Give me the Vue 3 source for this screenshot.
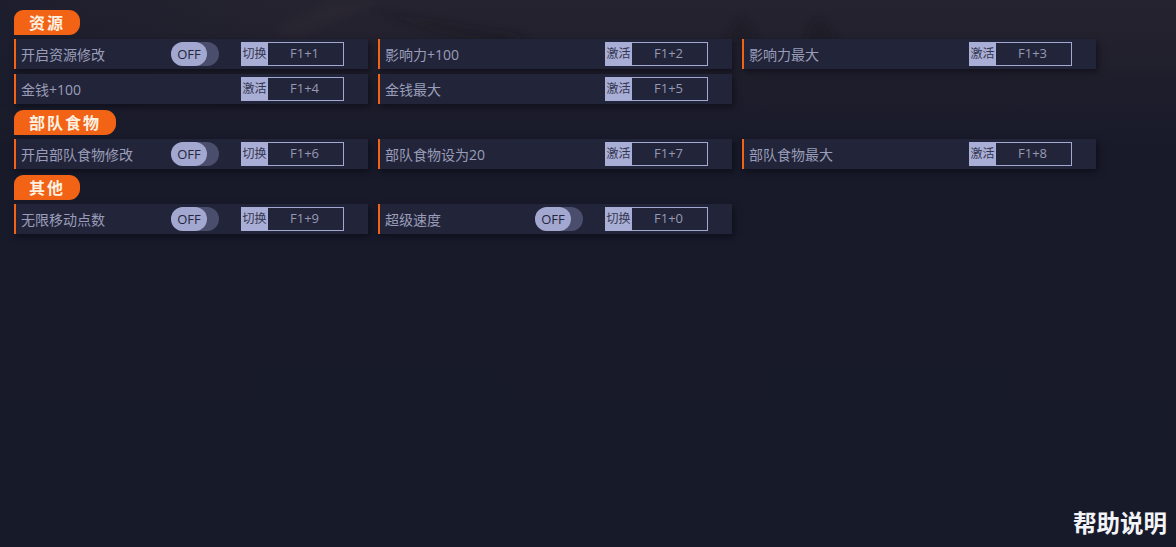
<script setup>
const sections = [
  { title: '资源', rows: [
    { name: '开启资源修改', toggle: true, act: '切换', key: 'F1+1' },
    { name: '影响力+100', act: '激活', key: 'F1+2' },
    { name: '影响力最大', act: '激活', key: 'F1+3' },
    { name: '金钱+100', act: '激活', key: 'F1+4' },
    { name: '金钱最大', act: '激活', key: 'F1+5' },
  ] },
  { title: '部队食物', rows: [
    { name: '开启部队食物修改', toggle: true, act: '切换', key: 'F1+6' },
    { name: '部队食物设为20', act: '激活', key: 'F1+7' },
    { name: '部队食物最大', act: '激活', key: 'F1+8' },
  ] },
  { title: '其他', rows: [
    { name: '无限移动点数', toggle: true, act: '切换', key: 'F1+9' },
    { name: '超级速度', toggle: true, act: '切换', key: 'F1+0' },
  ] },
]
</script>

<template>
  <div class="page">
    <svg class="backdrop" width="1176" height="130" viewBox="0 0 1176 130" aria-hidden="true">
      <defs>
        <filter id="soft"><feGaussianBlur stdDeviation="4" /></filter>
        <linearGradient id="leftShade" x1="0" y1="0" x2="1" y2="0">
          <stop offset="0" stop-color="#171a2c" stop-opacity="0.55" />
          <stop offset="1" stop-color="#171a2c" stop-opacity="0" />
        </linearGradient>
      </defs>
      <rect width="290" height="110" fill="url(#leftShade)" />
      <g filter="url(#soft)" fill="#15151f" opacity="0.4">
        <path d="M370 10 L420 20 L530 38 L500 42 L440 30 Z" />
        <path d="M727 40 L742 16 L756 40 Z" />
        <path d="M805 40 L818 17 L838 40 Z" />
      </g>
      <g filter="url(#soft)" fill="#46434c" opacity="0.12">
        <path d="M270 30 L330 0 L385 0 L300 38 Z" />
      </g>
    </svg>
    <main class="content">
      <section v-for="s in sections" :key="s.title" class="section">
        <h2 class="title">{{ s.title }}</h2>
        <div class="grid">
          <div v-for="r in s.rows" :key="r.key" class="row">
            <span class="name">{{ r.name }}</span>
            <span v-if="r.toggle" class="toggle"><span class="knob">OFF</span></span>
            <span class="keybox">
              <span class="act">{{ r.act }}</span>
              <span class="key">{{ r.key }}</span>
            </span>
          </div>
        </div>
      </section>
    </main>
    <div class="help">帮助说明</div>
  </div>
</template>

<style scoped>
.page {
  position: relative;
  width: 1176px;
  height: 547px;
  overflow: hidden;
  background: linear-gradient(180deg, #25232f 0%, #23212d 7%, #1d1d2b 17%, #181a2a 27%, #171a29 100%);
  font-family: "Open Sans", "Noto Sans CJK SC", sans-serif;
}
.backdrop {
  position: absolute;
  left: 0;
  top: 0;
}
.content {
  position: relative;
  display: flex;
  flex-direction: column;
  gap: 6px;
  padding: 10px 0 0 14px;
}
.section {
  display: flex;
  flex-direction: column;
  align-items: flex-start;
  gap: 4px;
}
.title {
  margin: 0;
  height: 25px;
  padding: 0 15px;
  background: #f26316;
  border-radius: 9px 11px 11px 0;
  color: #fdf1e2;
  font-size: 16px;
  font-weight: 700;
  line-height: 25px;
  letter-spacing: 2px;
  font-family: "Noto Sans CJK SC", sans-serif;
}
.grid {
  display: grid;
  grid-template-columns: repeat(3, 354px);
  gap: 5px 10px;
}
.row {
  display: flex;
  align-items: center;
  height: 30px;
  box-sizing: border-box;
  padding-left: 5px;
  background: #22253a;
  border-left: 2px solid #f26316;
  box-shadow: 2px 3px 6px rgba(8, 8, 14, 0.55);
}
.name {
  color: #9a9db9;
  font-size: 14px;
  line-height: 30px;
  padding-top: 2px;
}
.toggle {
  display: flex;
  width: 48px;
  height: 24px;
  margin-left: auto;
  margin-right: 22px;
  border-radius: 12px;
  background: #4a4d6c;
}
.knob {
  width: 36px;
  height: 24px;
  border-radius: 12px;
  background: #a3a8d0;
  color: #23263c;
  font-size: 13px;
  line-height: 25px;
  text-align: center;
}
.keybox {
  display: flex;
  width: 103px;
  height: 24px;
  margin-right: 24px;
  box-sizing: border-box;
}
.name + .keybox {
  margin-left: auto;
}
.act {
  width: 27px;
  background: #a9aed6;
  color: #34364f;
  font-size: 12px;
  line-height: 24px;
  text-align: center;
  white-space: nowrap;
}
.key {
  flex: 1;
  box-sizing: border-box;
  border: 1px solid #a3a8d0;
  border-left: none;
  color: #9699b4;
  font-size: 13px;
  line-height: 20px;
  text-align: center;
  padding-right: 2px;
}
.help {
  position: absolute;
  right: 9px;
  bottom: 11px;
  color: #f3f4f8;
  font-size: 23.5px;
  font-weight: 700;
  line-height: 28px;
  font-family: "Noto Sans CJK SC", sans-serif;
}
</style>
